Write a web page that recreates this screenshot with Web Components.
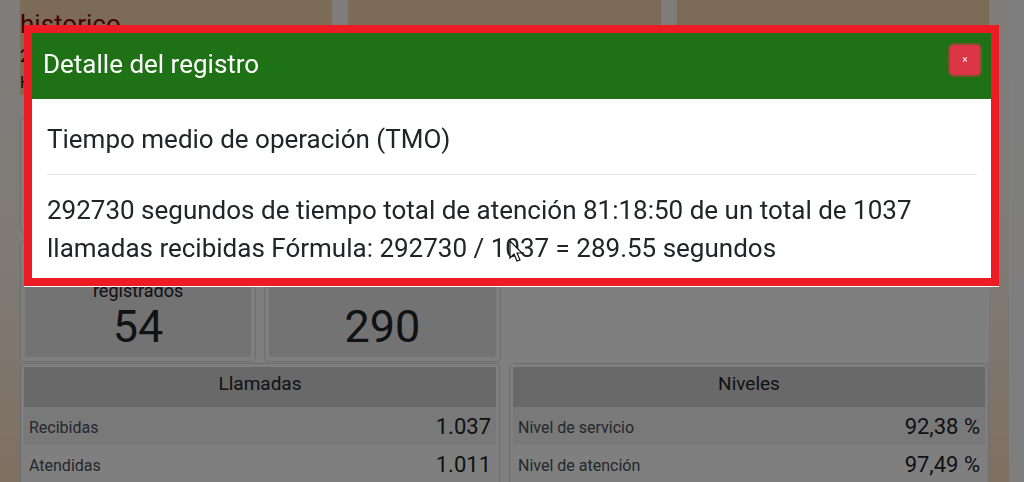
<!DOCTYPE html>
<html lang="es">
<head>
<meta charset="utf-8">
<meta name="viewport" content="width=device-width, initial-scale=1">
<title>Detalle del registro</title>
<style>
  body { margin: 0; min-height: 100vh; overflow: hidden; font-family: Roboto, "Liberation Sans", sans-serif; color: #212529; }
</style>
</head>
<body>
<call-dashboard>
  <summary-card slot="summary">
    <h2 slot="title">historico</h2>
    <span>2</span>
    <small>H</small>
  </summary-card>
  <summary-card slot="summary"></summary-card>
  <summary-card slot="summary"></summary-card>
  <kpi-card slot="kpi" value="54">registrados</kpi-card>
  <kpi-card slot="kpi" value="290"></kpi-card>
  <metric-table slot="metrics" heading="Llamadas" rows="Recibidas|1.037;Atendidas|1.011"></metric-table>
  <metric-table slot="metrics" heading="Niveles" rows="Nivel de servicio|92,38 %;Nivel de atención|97,49 %"></metric-table>
</call-dashboard>
<detail-modal>
  <span slot="title">Detalle del registro</span>
  <span slot="subject">Tiempo medio de operación (TMO)</span>
  292730 segundos de tiempo total de atención 81:18:50 de un total de 1037 llamadas recibidas Fórmula: 292730 / 1037 = 289.55 segundos
</detail-modal>

<script>
const define = (name, render) => customElements.define(name, class extends HTMLElement {
  connectedCallback() {
    if (this.shadowRoot) return;
    this.attachShadow({ mode: "open" }).innerHTML = render(this);
  }
});

define("call-dashboard", () => `
  <style>
    :host { display: grid; grid-template-columns: minmax(0, 1fr) 15px; min-height: 100vh; }
    main { padding: 0 20px; background: linear-gradient(#fffaf5, #fff4ea 55%, #ffdfc2); }
    .rail { background: #fdfdfd; }
    .summary { display: grid; grid-template-columns: repeat(3, 1fr); gap: 16px; }
    .sheet { margin-top: 22px; background: #fff; }
    .filters { height: 116px; box-sizing: border-box; border: 1px solid #dcdcdc; border-radius: 4px; }
    .kpis { display: grid; grid-template-columns: repeat(4, 1fr); gap: 8px; padding-top: 8px; }
    .metrics { display: grid; grid-template-columns: 1fr 1fr; gap: 9px; padding-top: 1px; }
  </style>
  <main>
    <div class="summary"><slot name="summary"></slot></div>
    <div class="sheet">
      <div class="filters"></div>
      <div class="kpis"><slot name="kpi"></slot></div>
      <div class="metrics"><slot name="metrics"></slot></div>
    </div>
  </main>
  <div class="rail"></div>`);

define("summary-card", () => `
  <style>
    :host { display: block; min-height: 95px; box-sizing: border-box; padding-top: 8px; background: #f6d6ae; color: #111; font-size: 18px; line-height: 26px; }
    ::slotted(h2) { margin: 0; font-size: 26px; font-weight: 400; line-height: 32px; color: #8b0000; }
    ::slotted(span), ::slotted(small) { display: block; }
    ::slotted(span) { line-height: 32px; }
    ::slotted(small) { font-size: 16px; line-height: 22px; }
  </style>
  <slot name="title"></slot><slot></slot>`);

define("kpi-card", el => `
  <style>
    :host { display: block; padding: 4px; border: 1px solid #dcdcdc; border-radius: 4px; background: #fff; text-align: center; }
    .box { height: 111px; display: flex; flex-direction: column; justify-content: flex-end; box-sizing: border-box; padding-bottom: 4px; border-radius: 3px; background: #e6e6e6; }
    .label { font-size: 18px; line-height: 20px; }
    .value { font-size: 45px; line-height: 52px; }
  </style>
  <div class="box"><span class="label"><slot></slot></span><span class="value">${el.getAttribute("value")}</span></div>`);

define("metric-table", el => `
  <style>
    :host { display: block; padding: 3px; border: 1px solid #dcdcdc; border-radius: 4px; background: #fff; }
    table { width: 100%; border-collapse: collapse; }
    caption { background: #d2d2d2; font-size: 19px; line-height: 34px; padding-bottom: 6px; }
    tr:nth-child(odd) { background: #f2f2f2; }
    th, td { height: 38px; box-sizing: border-box; padding: 2px 5px 0; font-weight: 400; }
    th { text-align: left; font-size: 16px; color: #495057; }
    td { text-align: right; font-size: 22px; line-height: 30px; }
  </style>
  <table>
    <caption>${el.getAttribute("heading")}</caption>
    <tbody>${el.getAttribute("rows").split(";").map(r => {
      const [label, value] = r.split("|");
      return `<tr><th scope="row">${label}</th><td>${value}</td></tr>`;
    }).join("")}</tbody>
  </table>`);

define("detail-modal", () => `
  <style>
    :host { display: block; position: fixed; inset: 0; background: rgba(0, 0, 0, .5); }
    section { position: relative; margin: 25px 25px 0 24px; border: 8px solid #ed1c24; background: #fff; box-shadow: 0 1px 0 #fff; }
    header { display: flex; justify-content: space-between; align-items: flex-start; min-height: 66px; box-sizing: border-box; padding: 12px 11px 0; background: #1f7116; color: #fff; }
    h1, h2, p { margin: 0; font-weight: 400; }
    h1 { font-size: 26px; line-height: 38px; }
    button { width: 30px; height: 30px; padding: 0; border: 0; border-radius: 4px; background: #dc3545; box-shadow: 0 0 0 2px rgba(220, 53, 69, .5); color: #fff; font: 10px/30px Roboto, sans-serif; }
    .body { padding: 21px 14px 11px 15px; font-size: 26px; line-height: 38px; }
    h2 { font-size: 26px; line-height: 38px; }
    hr { margin: 16px 0; border: 0; border-top: 1px solid #e5e5e5; }
    svg { position: absolute; left: calc(50% - 3px); bottom: 14px; width: 14px; height: 24px; }
  </style>
  <section role="dialog" aria-modal="true" aria-labelledby="title">
    <header>
      <h1 id="title"><slot name="title"></slot></h1>
      <button type="button" aria-label="Cerrar">×</button>
    </header>
    <div class="body">
      <h2><slot name="subject"></slot></h2>
      <hr>
      <p><slot></slot></p>
    </div>
    <svg viewBox="0 0 14 24" aria-hidden="true"><path d="M1 1v17l4-4 3 7 3-1-3-7h5z" fill="#fff" stroke="#111" stroke-width="1.2"/></svg>
  </section>`);
</script>
</body>
</html>
